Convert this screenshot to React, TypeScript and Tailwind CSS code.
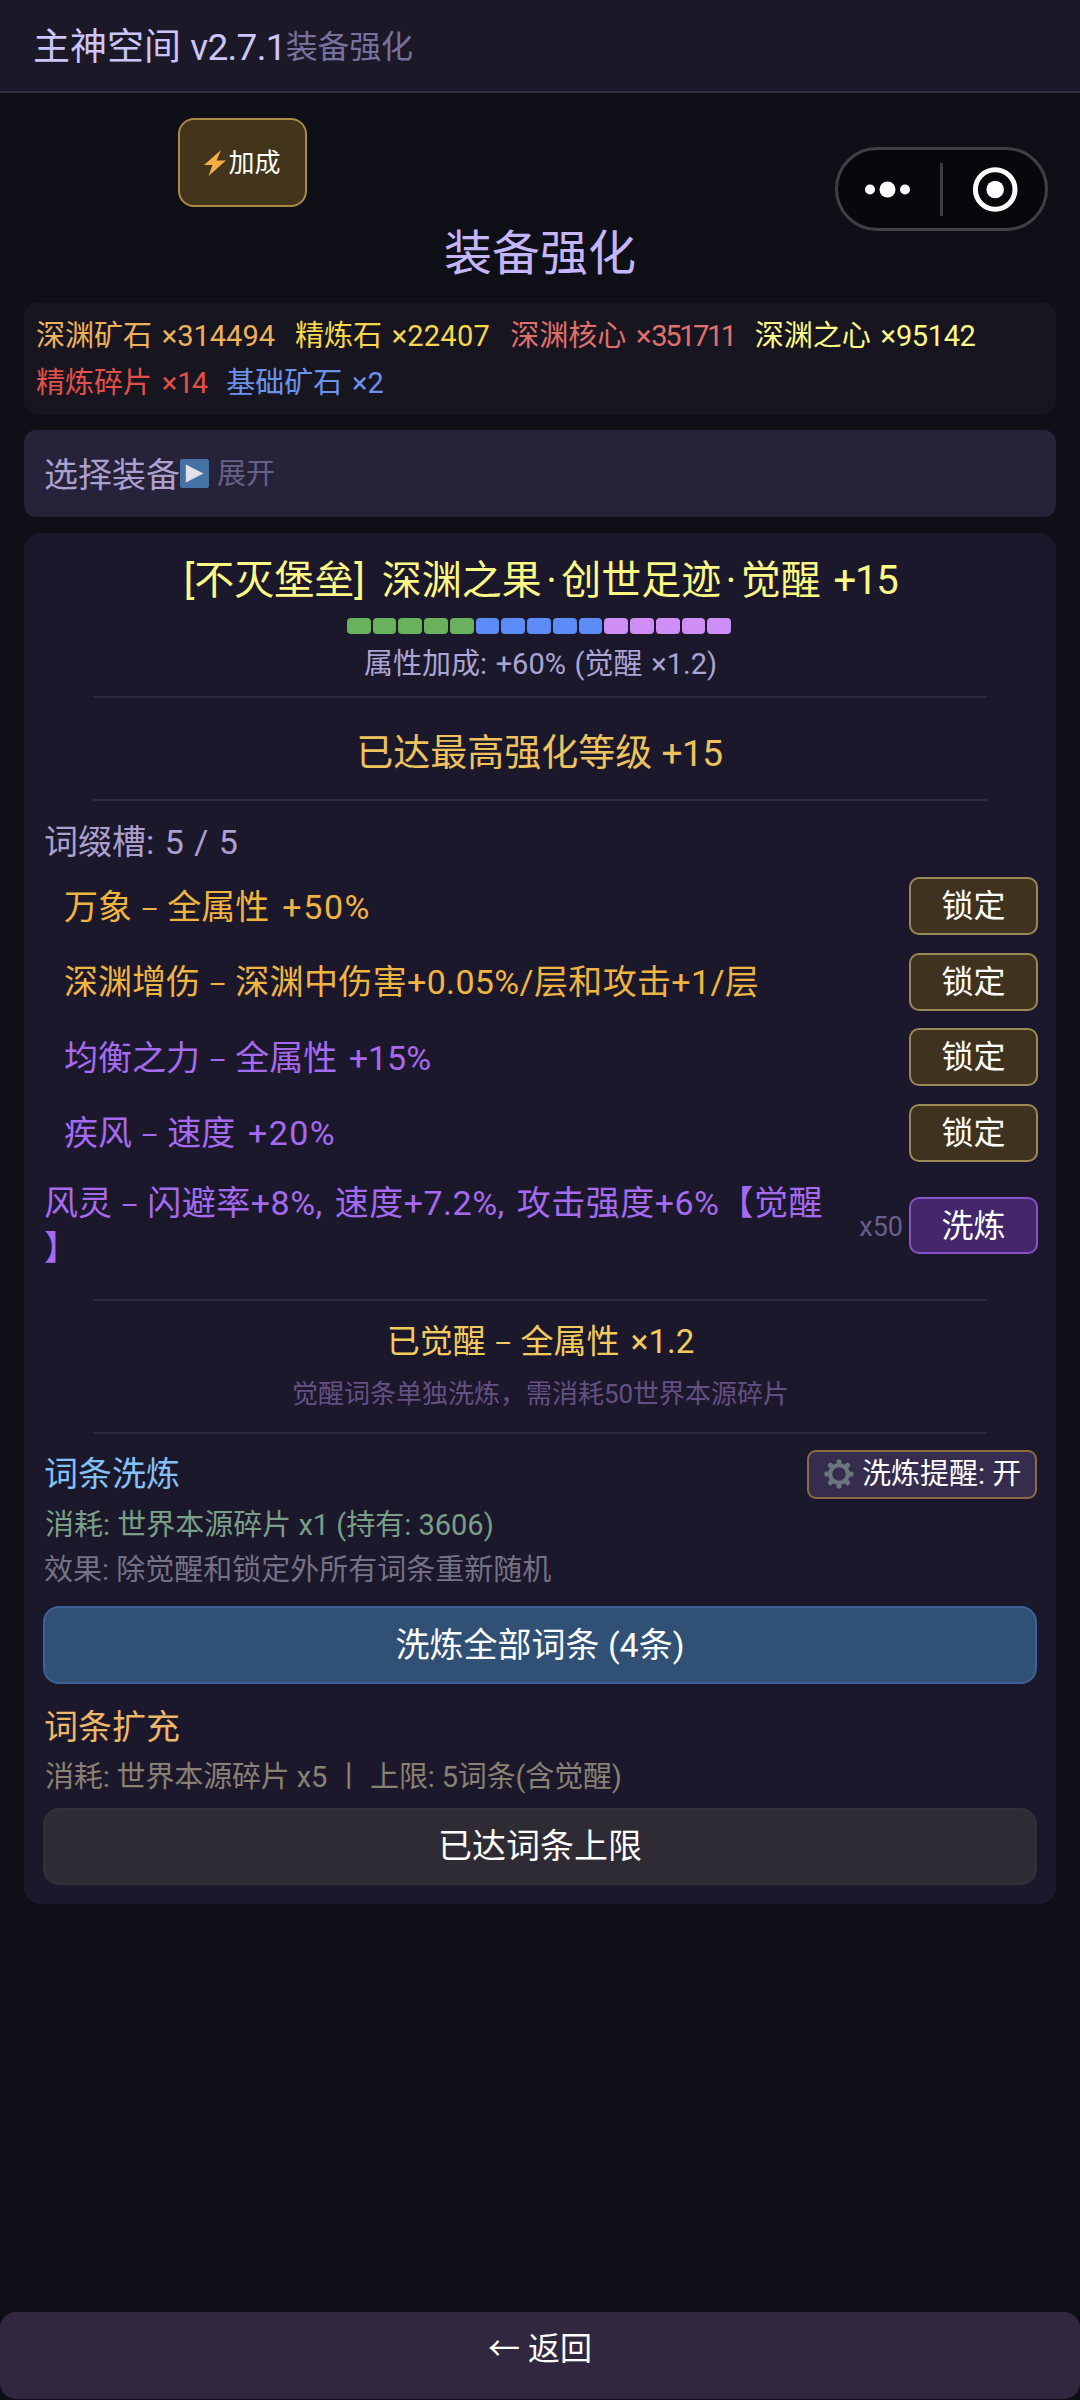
type Resource = { name: string; count: number; color: string; tracking?: string };
type Affix = { name: string; effect: string; bonus?: string; color: string; tracking?: string };

const resources: Resource[] = [
  { name: "深渊矿石", count: 314494, color: "text-[#eeb15a]" },
  { name: "精炼石", count: 22407, color: "text-[#f8d84a]", tracking: "tracking-[0.3px]" },
  { name: "深渊核心", count: 351711, color: "text-[#e0706c]", tracking: "tracking-[-2.4px]" },
  { name: "深渊之心", count: 95142, color: "text-[#fdf985]", tracking: "tracking-[-0.4px]" },
  { name: "精炼碎片", count: 14, color: "text-[#e2504a]", tracking: "tracking-[-1.8px]" },
  { name: "基础矿石", count: 2, color: "text-[#6c92ec]" },
];

const affixes: Affix[] = [
  { name: "万象", effect: "全属性", bonus: "+50%", color: "text-[#f0b541]", tracking: "tracking-[1.6px]" },
  { name: "深渊增伤", effect: "深渊中伤害+0.05%/层和攻击+1/层", color: "text-[#f0b541]" },
  { name: "均衡之力", effect: "全属性", bonus: "+15%", color: "text-[#a66af1]" },
  { name: "疾风", effect: "速度", bonus: "+20%", color: "text-[#a66af1]", tracking: "tracking-[1.4px]" },
];

const levels = Array.from({ length: 15 }, (_, i) => i);

const levelColor = (level: number) => {
  if (level < 5) return "bg-[#69b15c]";
  if (level < 10) return "bg-[#5d8bf7]";
  return "bg-[#cf8ef5]";
};

const BoltIcon = () => (
  <svg width="22" height="26" viewBox="0 0 22 26" className="shrink-0">
    <path d="M17 0 0 15h8.5L4.5 26 22 10.5h-9.5z" fill="#f6ae45" />
  </svg>
);

const PlayIcon = () => (
  <svg width="29" height="29" viewBox="0 0 29 29" className="shrink-0">
    <rect width="29" height="29" rx="2.5" fill="#4572a5" />
    <path d="M5.8 5.5 23.5 14.5 5.8 23.5z" fill="#e2e0e8" />
  </svg>
);

const GearIcon = () => (
  <svg width="30" height="30" viewBox="-15 -15 30 30" className="shrink-0" fill="#69767c">
    {[0, 45, 90, 135, 180, 225, 270, 315].map((angle) => (
      <rect key={angle} x="-2.4" y="-14.6" width="4.8" height="6" rx="1.6" transform={`rotate(${angle})`} />
    ))}
    <circle r="8.8" fill="none" stroke="#69767c" strokeWidth="4" />
  </svg>
);

const Capsule = () => (
  <div className="absolute left-[835px] top-[147px] flex h-[84px] w-[213px] items-center rounded-full border-3 border-[#3f3f44] bg-[#08080c]">
    <svg width="102" height="54" viewBox="0 0 102 54" fill="#fff">
      <circle cx="32" cy="27.5" r="5" />
      <circle cx="49.5" cy="27.5" r="8" />
      <circle cx="67" cy="27.5" r="5" />
    </svg>
    <div className="h-[53px] w-[3px] bg-[#3a3a3f]" />
    <svg width="102" height="54" viewBox="0 0 102 54" fill="#fff">
      <circle cx="52.2" cy="27.5" r="19.8" fill="none" stroke="#fff" strokeWidth="5" />
      <circle cx="52.2" cy="27.5" r="8.8" />
    </svg>
  </div>
);

const Divider = ({ className }: { className: string }) => (
  <div className={`ml-[50px] mr-[51px] h-[2px] shrink-0 bg-[#2d293e] ${className}`} />
);

const Dash = () => <span className="text-[28px] leading-none">–</span>;

const Header = () => (
  <header className="flex h-[93px] items-center border-b-2 border-[#2f2c42] bg-[#1b1927] pl-[33px] pt-[3px] leading-none">
    <span className="text-[37px] text-[#cbc5fb]">
      主神空间 <span className="tracking-[-0.7px]">v2.7.1</span>
    </span>
    <span className="text-[32px] tracking-[-0.3px] text-[#77719f]">装备强化</span>
  </header>
);

const Resources = () => (
  <section className="mx-6 mt-1 flex h-[111px] flex-wrap content-start gap-x-[20px] rounded-xl bg-[#171520] pl-3 pt-[10px]">
    {resources.map((item) => (
      <span key={item.name} className={`text-[29px] leading-[47px] [word-spacing:2.5px] ${item.color}`}>
        {item.name} ×<span className={item.tracking}>{item.count}</span>
      </span>
    ))}
  </section>
);

const AffixRow = ({ name, effect, bonus, color, tracking }: Affix) => (
  <li className="flex h-[58px] items-center justify-between pl-[21px]">
    <span className={`pt-px text-[34px] leading-none ${color}`}>
      {name} <Dash /> {bonus ? effect : <span className="tracking-[0.35px]">{effect}</span>}
      {bonus && <span className={`[word-spacing:3px] ${tracking ?? ""}`}> {bonus}</span>}
    </span>
    <button className="h-[58px] w-[129px] rounded-[10px] border-2 border-[#9b8955] bg-[#3f331f] text-[32px] leading-none text-white">
      锁定
    </button>
  </li>
);

const EquipmentPanel = () => (
  <section className="mx-6 mt-4 flex h-[1371px] flex-col rounded-2xl bg-[#1c182b] pl-[19px] pr-[18px] pt-[18px]">
    <h2 className="text-center text-[40px] leading-[60px] text-[#fdf985] [word-spacing:3px]">
      <span className="mr-1">[不灭堡垒]</span> 深渊之果<span className="mx-[4.5px]">·</span>创世足迹<span className="mx-[4.5px]">·</span>觉醒{" "}
      <span className="tracking-[-1.3px]">+15</span>
    </h2>
    <div className="ml-[304px] mt-[7px] flex h-4 w-[384px] gap-[2px]">
      {levels.map((level) => (
        <div key={level} className={`flex-1 rounded-[4px] ${levelColor(level)}`} />
      ))}
    </div>
    <p className="mt-2 text-center text-[29px] leading-[44px] text-[#aba5d3] [word-spacing:1.5px]">属性加成: +60% (觉醒 ×1.2)</p>
    <Divider className="mt-[10px]" />
    <p className="mt-[26px] pr-[2px] text-center text-[37px] leading-[60px] text-[#eec35c]">
      已达最高强化等级 <span className="tracking-[-0.5px]">+15</span>
    </p>
    <Divider className="mt-[15px]" />

    <h3 className="mt-[21px] pl-px text-[34px] leading-[40px] text-[#aca0d0] [word-spacing:2px]">词缀槽: 5 / 5</h3>
    <ul className="mt-[15px] flex flex-col gap-[17.6px]">
      {affixes.map((affix) => (
        <AffixRow key={affix.name} {...affix} />
      ))}
    </ul>
    <div className="mt-[19px] flex h-[90px] items-center">
      <p className="w-[814px] pl-px text-[34px] leading-[45px] text-[#a66af1]">
        风灵 <Dash />{" "}
        <span className="tracking-[0.5px] [word-spacing:3px]">闪避率+8%, 速度+7.2%, 攻击强度+6%【觉醒</span>
        <br />】
      </p>
      <span className="ml-auto mr-[6px] pt-1 text-[27px] leading-none text-[#6a5f8a]">x50</span>
      <button className="h-[57px] w-[129px] rounded-[10px] border-2 border-[#8552c8] bg-[#43276a] text-[32px] leading-none text-white">
        洗炼
      </button>
    </div>

    <Divider className="mt-[28px]" />
    <p className="mt-[21px] text-center text-[33px] leading-[40px] text-[#f3cb5c]">
      已觉醒 <Dash /> 全属性 <span className="ml-[3px]">×1.2</span>
    </p>
    <p className="mt-[14px] text-center text-[26px] leading-[36px] text-[#655084]">觉醒词条单独洗炼，需消耗50世界本源碎片</p>
    <Divider className="mt-5" />

    <div className="mr-px mt-4 flex h-[49px] items-center justify-between pl-px">
      <h3 className="text-[34px] leading-none text-[#83c2f8]">词条洗炼</h3>
      <button className="flex h-[49px] w-[230px] items-center gap-2 rounded-[9px] border-2 border-[#8a6c42] bg-[#362c4e] pl-[15px] text-[29px] leading-none text-white">
        <GearIcon />
        <span className="pt-px">洗炼提醒: 开</span>
      </button>
    </div>
    <p className="mt-1 pl-[2px] text-[29px] leading-[44px] text-[#7a9f88]">消耗: 世界本源碎片 x1 (持有: 3606)</p>
    <p className="pl-px text-[29px] leading-[46px] text-[#757187]">效果: 除觉醒和锁定外所有词条重新随机</p>
    <button className="mr-px mt-[13px] h-[78px] rounded-2xl border-2 border-[#3b6195] bg-[#315075] text-[34px] leading-none text-white">
      洗炼全部词条 (4条)
    </button>

    <h3 className="mt-[21px] pl-px text-[34px] leading-[44px] text-[#eeb668]">词条扩充</h3>
    <p className="mt-[6px] pl-[2px] text-[29px] leading-[44px] tracking-[-0.15px] text-[#898173]">消耗: 世界本源碎片 x5 丨 上限: 5词条(含觉醒)</p>
    <button className="mr-px mt-[9px] h-[77px] rounded-2xl border-2 border-[#322f39] bg-[#2e2b34] text-[34px] leading-none text-white">
      已达词条上限
    </button>
  </section>
);

export default function App() {
  return (
    <div className="relative flex h-[2400px] w-[1080px] flex-col overflow-hidden bg-[#0f0f17] font-[Roboto,'Noto_Sans_CJK_SC',sans-serif]">
      <Header />
      <button className="ml-[178px] mt-[25px] flex h-[89px] w-[129px] items-center justify-center gap-[2px] rounded-2xl border-2 border-[#a98a42] bg-[#42351b] text-[26px] leading-none text-white">
        <BoltIcon />
        加成
      </button>
      <Capsule />
      <h1 className="pt-[2px] text-center text-[48px] leading-[90px] text-[#c5b5fb]">装备强化</h1>
      <Resources />
      <div className="mx-6 mt-4 flex h-[87px] items-center rounded-xl bg-[#26223a] pl-5 leading-none">
        <span className="pt-[2px] text-[34px] text-[#aca0d0]">选择装备</span>
        <PlayIcon />
        <span className="ml-2 pt-[2px] text-[29px] text-[#675f85]">展开</span>
      </div>
      <EquipmentPanel />
      <button className="mb-px mt-auto h-[87px] rounded-2xl bg-[#31273f] pb-[13px] text-[32px] leading-none text-white">
        ← 返回
      </button>
    </div>
  );
}
